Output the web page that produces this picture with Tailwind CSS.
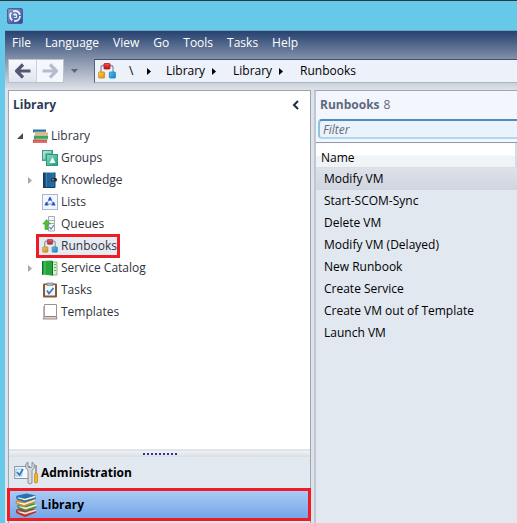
<!DOCTYPE html>
<html lang="en">
<head>
<meta charset="utf-8">
<meta name="viewport" content="width=device-width, initial-scale=1">
<title>Library - Runbooks</title>
<script src="https://cdn.jsdelivr.net/npm/@tailwindcss/browser@4"></script>
</head>
<body class="flex h-screen flex-col overflow-hidden bg-[#67c9ea] text-[12px] leading-4 text-black" style="font-family:'Segoe UI','Open Sans','Noto Sans',sans-serif">

<!-- Shared drawings; kept rendered at zero size so that the gradients resolve -->
<svg class="absolute size-0" aria-hidden="true">
  <defs>
    <linearGradient id="red" x2="0" y2="1"><stop stop-color="#f4564c"/><stop offset="1" stop-color="#b80d18"/></linearGradient>
    <linearGradient id="gold" x2="1" y2="1"><stop stop-color="#fbd35c"/><stop offset="1" stop-color="#dd8b00"/></linearGradient>
    <linearGradient id="sky" x2="1" y2="1"><stop stop-color="#5cc6f2"/><stop offset="1" stop-color="#0a7fc4"/></linearGradient>
    <linearGradient id="app" x2="1" y2="1"><stop stop-color="#8a9cd0"/><stop offset="1" stop-color="#2d4590"/></linearGradient>
    <linearGradient id="teal" x2="1" y2="1"><stop stop-color="#8fdcc8"/><stop offset="1" stop-color="#1f9c7c"/></linearGradient>
    <linearGradient id="navy" x2="1" y2="0"><stop stop-color="#12304f"/><stop offset=".25" stop-color="#1d5f96"/><stop offset="1" stop-color="#2672ad"/></linearGradient>
    <symbol id="runbook" viewBox="0 0 18 16">
      <path d="M3 9V4.500Q3 2.500 5 2.500H13Q15 2.500 15 4.500V9" fill="none" stroke="#8b95a5" stroke-width="1.300"/>
      <rect x="6" y=".5" width="6" height="5.500" rx=".7" fill="url(#red)" stroke="#b01820" stroke-width=".8"/>
      <rect x=".6" y="9" width="6" height="6" rx=".7" fill="url(#gold)" stroke="#c98a10" stroke-width=".8"/>
      <rect x="11.400" y="9" width="6" height="6" rx=".7" fill="url(#sky)" stroke="#1583bd" stroke-width=".8"/>
    </symbol>
  </defs>
</svg>

<header class="flex h-[30px] shrink-0 items-center border-t border-[#2f3640] pl-[7px]">
  <svg class="size-4" viewBox="0 0 16 16" role="img" aria-label="Service Manager">
    <rect x=".5" y=".5" width="15" height="15" rx="1.500" fill="url(#app)" stroke="#4b5f9c"/>
    <circle cx="8" cy="8" r="5" fill="none" stroke="#e9effb" stroke-width="1.800" stroke-dasharray="8.500 2"/>
    <path d="M6 6.500h3.500v3H7M8 5v3" fill="none" stroke="#dfe8fa" stroke-width="1.200"/>
  </svg>
</header>

<div class="ml-[5px] flex min-h-0 flex-1 flex-col border-t border-[#6fa3c0] bg-[#dfe3e8]">
  <div class="shrink-0 bg-linear-to-b from-[#26426f] via-[#8995ad] via-50% to-[#dfe3e8] pb-[7px]">
    <nav class="mb-1 flex h-6 items-center gap-[14px] px-[7px] text-white" aria-label="Menu">
      <button>File</button><button>Language</button><button>View</button><button>Go</button><button>Tools</button><button>Tasks</button><button>Help</button>
    </nav>
    <div class="flex h-6 items-center pl-[3px]">
      <div class="flex h-6 border border-[#b9c2d0] bg-[#edf1f8]">
        <button class="flex w-7 items-center justify-center border-r border-[#c9d0dc] bg-linear-to-b from-[#f7f9fc] to-[#dfe5ef]" aria-label="Back">
          <svg class="size-4" viewBox="0 0 16 16"><path d="M15.500 8H2M8 1.500 1.500 8 8 14.500" fill="none" stroke="#535774" stroke-width="3.200"/></svg>
        </button>
        <button class="flex w-[26px] items-center justify-center bg-[#f4f7fc]" aria-label="Forward">
          <svg class="size-4" viewBox="0 0 16 16"><path d="M.500 8H14M8 1.500 14.500 8 8 14.500" fill="none" stroke="#b4bdcd" stroke-width="3.200"/></svg>
        </button>
      </div>
      <button class="flex h-6 w-5 items-center justify-center" aria-label="History"><svg class="h-1 w-[7px]" viewBox="0 0 7 4"><path d="M0 0h7L3.500 4z" fill="#5c6575"/></svg></button>
      <nav class="ml-[10px] flex h-6 flex-1 items-center border-y border-l border-t-[#42506a] border-b-[#aab5c4] border-l-[#53617c] bg-[#ecf1fa] pl-[3px]" aria-label="Breadcrumb">
        <svg class="h-4 w-[18px]"><use href="#runbook"/></svg>
        <a href="#" class="ml-[13px] w-[18px]">\</a>
        <svg class="h-[7px] w-1" viewBox="0 0 4 7"><path d="M0 0 4 3.500 0 7z"/></svg>
        <a href="#" class="ml-[15px] w-[46px]">Library</a>
        <svg class="h-[7px] w-1" viewBox="0 0 4 7"><path d="M0 0 4 3.500 0 7z"/></svg>
        <a href="#" class="ml-[17px] w-[46px]">Library</a>
        <svg class="h-[7px] w-1" viewBox="0 0 4 7"><path d="M0 0 4 3.500 0 7z"/></svg>
        <a href="#" class="ml-[17px]">Runbooks</a>
      </nav>
    </div>
  </div>

  <div class="flex min-h-0 flex-1 gap-[3px] pl-[3px]">
    <aside class="flex w-3/5 max-w-[303px] shrink-0 flex-col border border-b-0 border-[#9ba5b5] bg-white">
      <div class="flex h-7 items-center justify-between pr-[11px] pl-1">
        <h2 class="font-bold text-[#2c3a58]">Library</h2>
        <button aria-label="Collapse pane"><svg class="h-[10px] w-[7px]" viewBox="0 0 7 10"><path d="M6 1 2 5l4 4" fill="none" stroke="#1e2c48" stroke-width="2"/></svg></button>
      </div>

      <ul class="min-h-0 flex-1 overflow-hidden pt-[6px] text-[#30343e]">
        <li>
          <a href="#" class="flex h-[22px] items-center pl-2">
            <svg class="mr-[10px] size-[6px]" viewBox="0 0 6 6"><path d="M6 0v6H0z" fill="#4b4b4b"/></svg>
            <svg class="mr-[2px] h-[14px] w-4" viewBox="0 0 16 14">
              <path d="M0 .5h13v3H0z" fill="#2d74ae"/><path d="M2 3.500h13v3H2z" fill="#eab266"/><path d="M1 6.500h14v4H1z" fill="#35a66a"/><path d="M0 10.500h14V14H0z" fill="#d9534a"/>
              <path d="M1 3h12M3 6h12M3 10h12M1 13h13" stroke="#f2e6d8" stroke-width=".6" opacity=".7"/>
            </svg>
            Library</a>
          <ul>
            <li><a href="#" class="flex h-[22px] items-center pl-[33px]">
              <svg class="mr-[3px] size-4" viewBox="0 0 16 16"><rect x=".5" y=".5" width="10" height="10" fill="url(#teal)" stroke="#419f87"/><path d="M2 9V2h7" fill="none" stroke="#ccefe5"/><rect x="4.500" y="4.500" width="11" height="11" fill="url(#teal)" stroke="#36947b"/><path d="m10.500 7 3 6h-6z" fill="#effff9"/></svg>
              Groups</a></li>
            <li><a href="#" class="flex h-[22px] items-center pl-[19px]">
              <svg class="mr-[10px] h-[7px] w-1" viewBox="0 0 4 7"><path d="M0 0 4 3.500 0 7z" fill="#a9a9a9"/></svg>
              <svg class="mr-[3px] size-4" viewBox="0 0 16 16"><path d="M1 .5h12v15H1z" fill="url(#navy)"/><path d="M1 15.500h12M13 .5v15" stroke="#153e64"/><path d="M4.500 1v14" stroke="#5795c5" stroke-width=".6"/><rect x="9" y="6" width="6" height="3.500" rx="1.500" fill="#222b35"/><circle cx="11" cy="7.700" r=".8" fill="#e3d4aa"/></svg>
              Knowledge</a></li>
            <li><a href="#" class="flex h-[22px] items-center pl-[33px]">
              <svg class="mr-[3px] size-4" viewBox="0 0 16 16"><rect x=".5" y=".5" width="15" height="15" fill="#f2f6fd" stroke="#a9b7d0"/><path d="m8 5-4 5h8z" fill="none" stroke="#7798df"/><g fill="#2858c5"><path d="M6 6.500a2 2.500 0 0 1 4 0zM2.500 11.500a2 2.500 0 0 1 4 0zM9.500 11.500a2 2.500 0 0 1 4 0z"/><circle cx="8" cy="4.200" r="1.100"/><circle cx="4.500" cy="9" r="1.100"/><circle cx="11.500" cy="9" r="1.100"/></g></svg>
              Lists</a></li>
            <li><a href="#" class="flex h-[22px] items-center pl-[33px]">
              <svg class="mr-[3px] size-4" viewBox="0 0 16 16"><path d="M6.500.5h6v4h-6zM6.500 4.500h6v3h-6zM6.500 7.500h6v7.500h-6z" fill="#f5f7f9" stroke="#a3abb4"/><path d="m7.500 11 1.500 2 3-4" fill="none" stroke="#3f8ec7" stroke-width="1.200"/><path d="M4.500 3.500 8.500 8H6v5.500H3V8H.8z" fill="#57bd3b" stroke="#3a9c27" stroke-width=".6"/></svg>
              Queues</a></li>
            <li class="relative"><a href="#" aria-current="page" class="flex h-[22px] items-center pl-[33px]">
              <svg class="mr-[3px] h-[14px] w-4"><use href="#runbook"/></svg>
              <span class="relative z-10">Runbooks</span></a>
              <span class="pointer-events-none absolute -top-px left-[27px] h-6 w-[84px] border-3 border-[#ee1c24] bg-[#8094b8]/20"></span></li>
            <li><a href="#" class="flex h-[22px] items-center pl-[19px]">
              <svg class="mr-[10px] h-[7px] w-1" viewBox="0 0 4 7"><path d="M0 0 4 3.500 0 7z" fill="#a9a9a9"/></svg>
              <svg class="mr-[3px] size-4" viewBox="0 0 16 16"><path d="M9 2h6v13H9z" fill="#d9eed7" stroke="#71a96e" stroke-width=".8"/><path d="M13 4v1M13 7v1M13 10v1" stroke="#3f993d" stroke-width="1.500"/><path d="M0 1 10 .5v15L0 14.500z" fill="#27a53b"/><path d="M.5 1v14M10.500 1v14.500" stroke="#126d26"/><path d="M3 1.500v13" stroke="#73cf78" stroke-width=".7"/></svg>
              Service Catalog</a></li>
            <li><a href="#" class="flex h-[22px] items-center pl-[33px]">
              <svg class="mr-[3px] size-4" viewBox="0 0 16 16"><rect x="1" y="1.500" width="14" height="14" rx="1" fill="#875937"/><path d="M3 3h10v10.500H3z" fill="#f1f6fb"/><path d="M5 1h6v2.500H5z" fill="#b4b9c1" stroke="#69717b" stroke-width=".6"/><path d="m5 8.500 2 3L11.500 6" fill="none" stroke="#367bc5" stroke-width="1.700"/></svg>
              Tasks</a></li>
            <li><a href="#" class="flex h-[22px] items-center pl-[33px]">
              <svg class="mr-[3px] size-4" viewBox="0 0 16 16"><path d="M2.500.5h12v12h-12z" fill="#fff" stroke="#999494"/><path d="M2.500 12.500h12l.5 2.500H1z" fill="#ddd4d1" stroke="#89716b" stroke-width=".8"/><path d="M2.500 1v11L1 15V3z" fill="#b8b4b2"/></svg>
              Templates</a></li>
          </ul>
        </li>
      </ul>

      <div class="flex h-2 shrink-0 items-center justify-center gap-[2px] border-t-2 border-[#dfe4eb] bg-linear-to-b from-[#f0f1f3] to-[#d9dee5]" role="separator">
        <i class="size-[2px] bg-[#30349a]"></i><i class="size-[2px] bg-[#30349a]"></i><i class="size-[2px] bg-[#30349a]"></i><i class="size-[2px] bg-[#30349a]"></i><i class="size-[2px] bg-[#30349a]"></i><i class="size-[2px] bg-[#30349a]"></i><i class="size-[2px] bg-[#30349a]"></i><i class="size-[2px] bg-[#30349a]"></i><i class="size-[2px] bg-[#30349a]"></i>
      </div>
      <nav class="shrink-0 bg-[#e1e8f0] pb-[2px] font-bold" aria-label="Workspaces">
        <a href="#" class="flex h-8 items-center gap-[3px] pl-[5px]">
          <svg class="size-6" viewBox="0 0 24 24"><rect x=".7" y="5.500" width="15" height="12" fill="#f4f8fc" stroke="#8896a6"/><path d="M2 8h6v7H2z" fill="#e3f1fd" stroke="#74a5cc" stroke-width=".6"/><path d="m3 11 2.500 3L9 8" fill="none" stroke="#227ac0" stroke-width="1.600"/><path d="M14 1v5l2 1 2-1V1q3 1.500 2.500 5-.5 2-2.500 3v13q-2 2-4 0V9q-2.500-1-2.500-4T14 1z" fill="#d6dade" stroke="#777e86" stroke-width=".8"/><path d="M22 4v9" stroke="#747a82" stroke-width="1.300"/><rect x="20.500" y="12" width="3" height="10" rx="1.300" fill="#f3b51e" stroke="#b77808" stroke-width=".6"/></svg>
          Administration</a>
        <div class="relative">
          <a href="#" aria-current="page" class="flex h-8 items-center gap-[3px] bg-linear-to-b from-[#adcdf6] to-[#6ea2e7] pl-[5px]">
            <svg class="size-6" viewBox="0 0 24 24">
              <path d="m3 19 8 3.500 11-3.500v-2.500L11 19z" fill="#f1ddd6"/><path d="m2.500 16.500 8-3L22 16l-11 3.500-7-2.500q-1 1.200 0 2l7 2.500 11-3.500v1.500L11 24l-8-3.500q-2-2-.5-4z" fill="#bf3023"/>
              <path d="m4 14 7.500 3 11-3.500V11l-11 3z" fill="#e4efdf"/><path d="m4 11.500 8-2.500 10.500 2-11 3.500-6.500-2q-1 1 0 1.600l6.500 2.400 11-3.500v1.500l-11 3.800L4 15q-1.600-1.800 0-3.500z" fill="#3b9444"/>
              <path d="m2 9.500 8 3 11-4V6l-11 4z" fill="#fbeed2"/><path d="m2 7.500 9-3 10.500 2L10 10.300 3 8.500q-1 .8 0 1.500l7 2.300 11.500-4.300v1.400L10 13.900 2 11q-1.500-1.800 0-3.500z" fill="#d18c2e"/>
              <path d="m3 5 8 2.500 10-3V2.500l-10 3z" fill="#f2f6f9"/><path d="m2.500 2.800 10-2.300 9.500 2-11 3.300-7-1.700q-1 .7 0 1.400l7 2 11-3.200v1.400L11 9.200 3 6.500q-1.800-1.800-.5-3.700z" fill="#2672ab"/>
            </svg>
            Library</a>
          <span class="pointer-events-none absolute -top-px -right-px -left-[2px] h-[33px] border-3 border-[#ee1c24]"></span>
        </div>
      </nav>
    </aside>

    <main class="min-w-0 flex-1 border-t border-l-2 border-t-[#9ba5b5] border-l-[#bdc7d5] bg-[#e1e8f0]">
      <div class="bg-[#f3f7fd] pb-[3px]">
        <h1 class="flex h-7 items-center gap-1 pl-1 text-[#5e6980]"><b>Runbooks</b><span>8</span></h1>
        <input type="text" aria-label="Filter" placeholder="Filter" class="ml-[2px] block h-5 w-full rounded-l-sm border-2 border-t-[#4b8dc1] border-b-[#aed8ef] border-l-[#8ac4e5] bg-[#eaf2fc] px-[3px] italic placeholder:text-[#666c75]">
      </div>
      <table class="w-full border-collapse text-left">
        <thead><tr class="h-[25px] border-t border-[#8f9bab]"><th class="border-b border-[#d9dfe6] bg-linear-to-b from-white from-50% to-[#f1f4f7] to-50% pt-[6px] pl-[5px] font-normal">Name</th><th class="w-[2px] bg-[#d5dbe3]"></th></tr></thead>
        <tbody>
          <tr class="h-[22px] bg-linear-to-b from-[#dde1e9] to-[#d0d5df]"><td colspan="2" class="pl-2">Modify VM</td></tr>
          <tr class="h-[22px]"><td colspan="2" class="pl-2">Start-SCOM-Sync</td></tr>
          <tr class="h-[22px]"><td colspan="2" class="pl-2">Delete VM</td></tr>
          <tr class="h-[22px]"><td colspan="2" class="pl-2">Modify VM (Delayed)</td></tr>
          <tr class="h-[22px]"><td colspan="2" class="pl-2">New Runbook</td></tr>
          <tr class="h-[22px]"><td colspan="2" class="pl-2">Create Service</td></tr>
          <tr class="h-[22px]"><td colspan="2" class="pl-2">Create VM out of Template</td></tr>
          <tr class="h-[22px]"><td colspan="2" class="pl-2">Launch VM</td></tr>
        </tbody>
      </table>
    </main>
  </div>
</div>
</body>
</html>
